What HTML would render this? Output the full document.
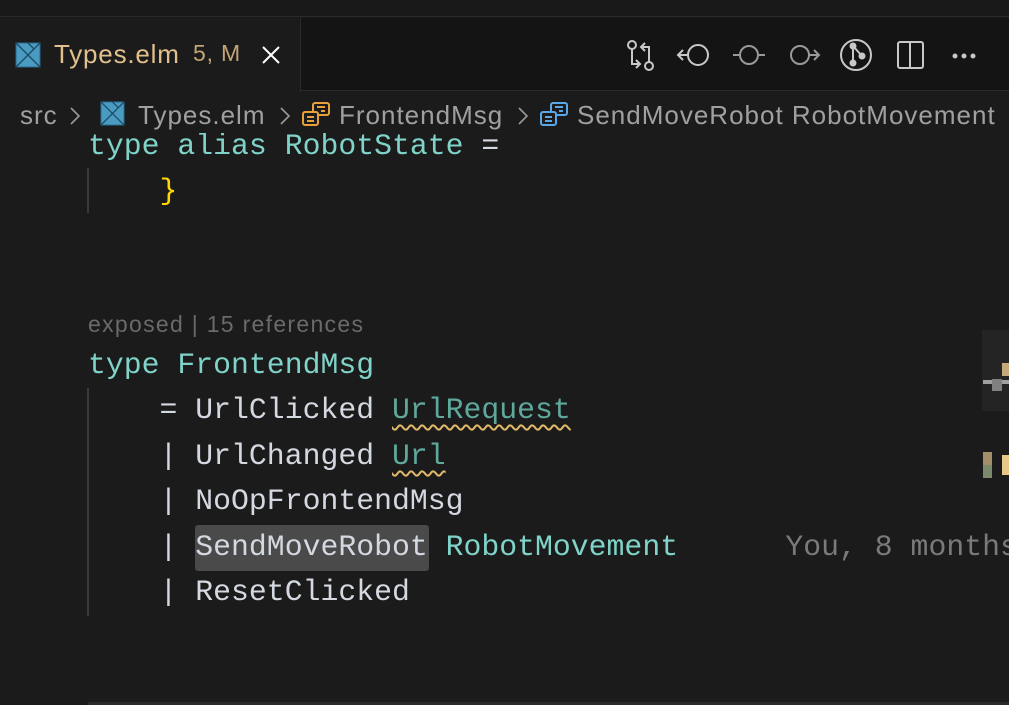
<!DOCTYPE html>
<html><head><meta charset="utf-8"><style>
*{margin:0;padding:0;box-sizing:border-box}
html,body{width:1009px;height:705px;overflow:hidden}
body{background:#1b1b1b;position:relative;font-family:"Liberation Sans",sans-serif}
#w{position:absolute;left:0;top:0;width:1009px;height:705px;overflow:hidden}
.a{position:absolute;white-space:pre}
.m{font-family:"Liberation Mono",monospace;font-size:29.8px;line-height:45.5px;color:#d4d8e0}
.t{color:#7fd3c8}
.u{color:#5fa89c}
.sq{text-decoration:underline wavy #e0b96a;text-decoration-thickness:1.5px;text-underline-offset:6px}
.bc{font-size:26px;letter-spacing:1px;color:#a0a0a0}
</style></head><body><div id="w">
<div class="a" style="left:0;top:0;width:1009px;height:17px;background:#181818;border-bottom:1px solid #2a2a2a"></div>
<div class="a" style="left:0;top:18px;width:1009px;height:73px;background:#141414;border-bottom:1px solid #2a2a2a"></div>
<div class="a" style="left:0;top:18px;width:301px;height:74px;background:#1b1b1b;border-right:1px solid #2a2a2a"></div>
<svg class="a" style="left:15px;top:42px" width="26" height="26" viewBox="0 0 26 26"><rect x="1" y="1" width="24" height="24" fill="#4a9bc2" stroke="#2a6a8c"/><path d="M1 1L25 25M1 25L13 13M13 1L19 7L25 1M19 7L13 13" stroke="#1d4a63" stroke-width="1.3" fill="none"/></svg>
<div class="a" style="left:54px;top:39px;font-size:26px;letter-spacing:0.8px;color:#e2c08d">Types.elm</div>
<div class="a" style="left:193px;top:40px;font-size:23px;letter-spacing:0.8px;color:#c2a476">5, M</div>
<svg class="a" style="left:261px;top:45px" width="20" height="20"><path d="M2 2L18 18M18 2L2 18" stroke="#fff" stroke-width="2"/></svg>
<svg class="a" style="left:620px;top:36px" width="389" height="40" viewBox="0 0 389 40" fill="none" stroke="#c8c8c8" stroke-width="2">
<circle cx="12" cy="9" r="4"/><circle cx="29" cy="30" r="4"/><path d="M12 13V28H19M16 24L20 28L16 32M29 26V11H22M25 7L21 11L25 15"/>
<circle cx="78" cy="19" r="10"/><path d="M68 19H58M63 14L58 19L63 24"/>
<circle cx="129" cy="19" r="9" stroke="#999"/><path d="M113 19H120M138 19H145" stroke="#999"/>
<circle cx="180" cy="19" r="9" stroke="#999"/><path d="M189 19H198M194 14L199 19L194 24" stroke="#999"/>
<circle cx="236" cy="19" r="15"/><circle cx="233" cy="10" r="2.5" fill="#c8c8c8"/><circle cx="233" cy="27" r="2.5" fill="#c8c8c8"/><circle cx="242" cy="20" r="2.5" fill="#c8c8c8"/><path d="M233 10V27M233 10L242 20"/>
<rect x="278" y="6" width="25" height="26" rx="2"/><path d="M290 6V32"/>
<circle cx="335" cy="20" r="1.5" fill="#c8c8c8"/><circle cx="344" cy="20" r="1.5" fill="#c8c8c8"/><circle cx="353" cy="20" r="1.5" fill="#c8c8c8"/>
</svg>
<div class="a bc" style="left:20px;top:100px">src</div>
<svg class="a" style="left:68px;top:105px" width="14" height="22"><path d="M3 3L11 11L3 19" stroke="#999" stroke-width="1.6" fill="none"/></svg>
<svg class="a" style="left:100px;top:101px" width="25" height="25" viewBox="0 0 26 26"><rect x="1" y="1" width="24" height="24" fill="#4a9bc2" stroke="#2a6a8c"/><path d="M1 1L25 25M1 25L13 13M13 1L19 7L25 1M19 7L13 13" stroke="#1d4a63" stroke-width="1.3" fill="none"/></svg>
<div class="a bc" style="left:138px;top:100px">Types.elm</div>
<svg class="a" style="left:278px;top:105px" width="14" height="22"><path d="M3 3L11 11L3 19" stroke="#999" stroke-width="1.6" fill="none"/></svg>
<svg class="a" style="left:301px;top:101px" width="30" height="26" fill="none" stroke="#e8a03a" stroke-width="2"><rect x="12" y="2" width="16" height="12" rx="2"/><rect x="2" y="11" width="15" height="13" rx="2" fill="#1b1b1b"/><path d="M6 16H13M6 20H13M16 6H24M20 10H24"/></svg>
<div class="a bc" style="left:339px;top:100px">FrontendMsg</div>
<svg class="a" style="left:516px;top:105px" width="14" height="22"><path d="M3 3L11 11L3 19" stroke="#999" stroke-width="1.6" fill="none"/></svg>
<svg class="a" style="left:539px;top:101px" width="30" height="26" fill="none" stroke="#5aa7e8" stroke-width="2"><rect x="12" y="2" width="16" height="12" rx="2"/><rect x="2" y="11" width="15" height="13" rx="2" fill="#1b1b1b"/><path d="M6 16H13M6 20H13M16 6H24M20 10H24"/></svg>
<div class="a bc" style="left:577px;top:100px">SendMoveRobot RobotMovement</div>
<div class="a" style="left:87px;top:168px;width:2px;height:45px;background:#3a3a3a"></div>
<div class="a" style="left:87px;top:388px;width:2px;height:228px;background:#3a3a3a"></div>
<div class="a m t" style="left:88px;top:124px;clip-path:inset(9px 0 0 0)">type alias RobotState <span style="color:#d4d8e0">=</span></div>
<div class="a m" style="left:88px;top:169px;color:#ffd700">    }</div>
<div class="a" style="left:88px;top:311px;font-size:23px;letter-spacing:1.3px;color:#6a6a6a">exposed | 15 references</div>
<div class="a" style="left:195px;top:525px;width:234px;height:46px;background:#4a4a4a;border-radius:3px"></div>
<div class="a m t" style="left:88px;top:343px">type FrontendMsg</div>
<div class="a m" style="left:88px;top:388px">    = UrlClicked <span class="u sq">UrlRequest</span></div>
<div class="a m" style="left:88px;top:434px">    | UrlChanged <span class="u sq">Url</span></div>
<div class="a m" style="left:88px;top:479px">    | NoOpFrontendMsg</div>
<div class="a m" style="left:88px;top:525px">    | SendMoveRobot <span class="t">RobotMovement</span>      <span style="color:#7a7a7a">You, 8 months</span></div>
<div class="a m" style="left:88px;top:570px">    | ResetClicked</div>
<div class="a" style="left:982px;top:330px;width:27px;height:81px;background:#242424"></div>
<div class="a" style="left:1002px;top:363px;width:7px;height:13px;background:#c4a97a"></div>
<div class="a" style="left:983px;top:380px;width:26px;height:4px;background:#a0a0a0"></div>
<div class="a" style="left:992px;top:379px;width:10px;height:12px;background:#808080"></div>
<div class="a" style="left:983px;top:452px;width:9px;height:13px;background:#a38e6a"></div>
<div class="a" style="left:983px;top:465px;width:9px;height:13px;background:#7a8a6a"></div>
<div class="a" style="left:1002px;top:455px;width:7px;height:20px;background:#e8c888"></div>
<div class="a" style="left:88px;top:702px;width:921px;height:3px;background:#2a2a2a"></div>
</div></body></html>
